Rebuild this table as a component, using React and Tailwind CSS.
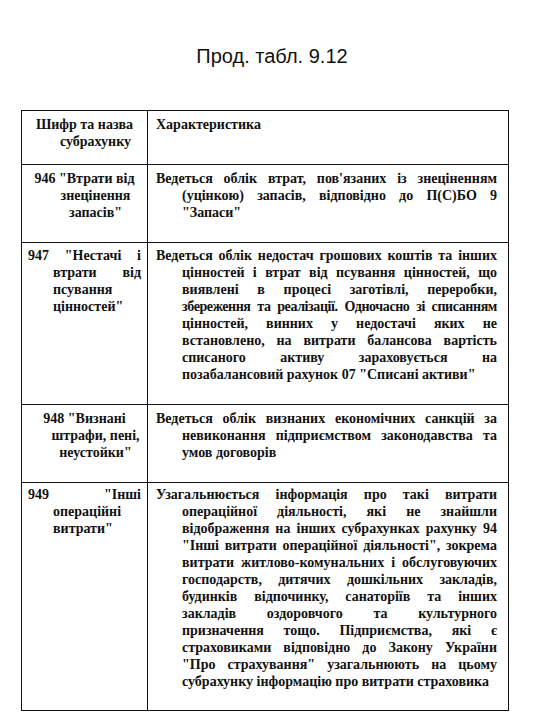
import React from "react";

const serif = { fontFamily: '"Liberation Serif", "Times New Roman", serif' };

function L({ children, a = "left", hang = false, w = "l", tight = false }) {
  const align =
    a === "center"
      ? "text-center whitespace-nowrap"
      : a === "justify"
      ? "text-justify [text-align-last:justify]"
      : "text-left whitespace-nowrap";
  const indent = hang
    ? w === "l"
      ? a === "center"
        ? "ml-[22px]"
        : "ml-[25px]"
      : "ml-[26px]"
    : "";
  const t = tight ? "tracking-[-0.4px] [word-spacing:-1px]" : "";
  return <div className={`${align} ${indent} ${t}`}>{children}</div>;
}

function Row({ h, pt, left, right, last = false }) {
  return (
    <div
      className={`grid grid-cols-[126px_1fr] ${h} ${last ? "" : "border-b border-[#111]"}`}
    >
      <div className={`border-r border-[#111] pl-[6px] pr-[6px] ${pt}`}>{left}</div>
      <div className={`pl-[8px] pr-[11px] ${pt}`}>{right}</div>
    </div>
  );
}

export default function App() {
  return (
    <div className="w-[540px] h-[720px] bg-white overflow-hidden">
      <div
        className="h-[110px] pt-[44px] text-center text-[20px] leading-[24px] text-[#111] pl-[4px]"
        style={{ fontFamily: '"Liberation Sans", Arial, sans-serif' }}
      >
        Прод. табл. 9.12
      </div>
      <div
        className="ml-[21px] w-[488px] border border-[#111] text-[14px] leading-[17px] font-bold text-[#111]"
        style={serif}
      >
        <Row
          h="h-[54px]"
          pt="pt-[5px]"
          left={
            <>
              <L a="center">Шифр та назва</L>
              <L a="center" hang>
                субрахунку
              </L>
            </>
          }
          right={<L>Характеристика</L>}
        />
        <Row
          h="h-[78px]"
          pt="pt-[5px]"
          left={
            <>
              <L a="center">946 "Втрати від</L>
              <L a="center" hang>
                знецінення
              </L>
              <L a="center" hang>
                запасів"
              </L>
            </>
          }
          right={
            <>
              <L a="justify">Ведеться облік втрат, пов'язаних із знеціненням</L>
              <L a="justify" hang w="r">
                (уцінкою) запасів, відповідно до П(С)БО 9
              </L>
              <L hang w="r">
                "Запаси"
              </L>
            </>
          }
        />
        <Row
          h="h-[162px]"
          pt="pt-[4px]"
          left={
            <>
              <L a="justify">947 "Нестачі і</L>
              <L a="justify" hang>
                втрати від
              </L>
              <L hang>псування</L>
              <L hang>цінностей"</L>
            </>
          }
          right={
            <>
              <L a="justify">Ведеться облік недостач грошових коштів та інших</L>
              <L a="justify" hang w="r">
                цінностей і втрат від псування цінностей, що
              </L>
              <L a="justify" hang w="r">
                виявлені в процесі заготівлі, переробки,
              </L>
              <L a="justify" hang w="r" tight>
                збереження та реалізації. Одночасно зі списанням
              </L>
              <L a="justify" hang w="r">
                цінностей, винних у недостачі яких не
              </L>
              <L a="justify" hang w="r">
                встановлено, на витрати балансова вартість
              </L>
              <L a="justify" hang w="r">
                списаного активу зараховується на
              </L>
              <L hang w="r">
                позабалансовий рахунок 07 "Списані активи"
              </L>
            </>
          }
        />
        <Row
          h="h-[78px]"
          pt="pt-[5px]"
          left={
            <>
              <L a="center">948 "Визнані</L>
              <L a="center" hang>
                штрафи, пені,
              </L>
              <L a="center" hang>
                неустойки"
              </L>
            </>
          }
          right={
            <>
              <L a="justify">Ведеться облік визнаних економічних санкцій за</L>
              <L a="justify" hang w="r">
                невиконання підприємством законодавства та
              </L>
              <L hang w="r">
                умов договорів
              </L>
            </>
          }
        />
        <Row
          h="h-[227px]"
          pt="pt-[3px]"
          last
          left={
            <>
              <L a="justify">949 "Інші</L>
              <L hang>операційні</L>
              <L hang>витрати"</L>
            </>
          }
          right={
            <>
              <L a="justify">Узагальнюється інформація про такі витрати</L>
              <L a="justify" hang w="r">
                операційної діяльності, які не знайшли
              </L>
              <L a="justify" hang w="r">
                відображення на інших субрахунках рахунку 94
              </L>
              <L a="justify" hang w="r">
                "Інші витрати операційної діяльності", зокрема
              </L>
              <L a="justify" hang w="r">
                витрати житлово-комунальних і обслуговуючих
              </L>
              <L a="justify" hang w="r">
                господарств, дитячих дошкільних закладів,
              </L>
              <L a="justify" hang w="r">
                будинків відпочинку, санаторіїв та інших
              </L>
              <L a="justify" hang w="r">
                закладів оздоровчого та культурного
              </L>
              <L a="justify" hang w="r">
                призначення тощо. Підприємства, які є
              </L>
              <L a="justify" hang w="r">
                страховиками відповідно до Закону України
              </L>
              <L a="justify" hang w="r">
                "Про страхування" узагальнюють на цьому
              </L>
              <L hang w="r">
                субрахунку інформацію про витрати страховика
              </L>
            </>
          }
        />
      </div>
    </div>
  );
}
